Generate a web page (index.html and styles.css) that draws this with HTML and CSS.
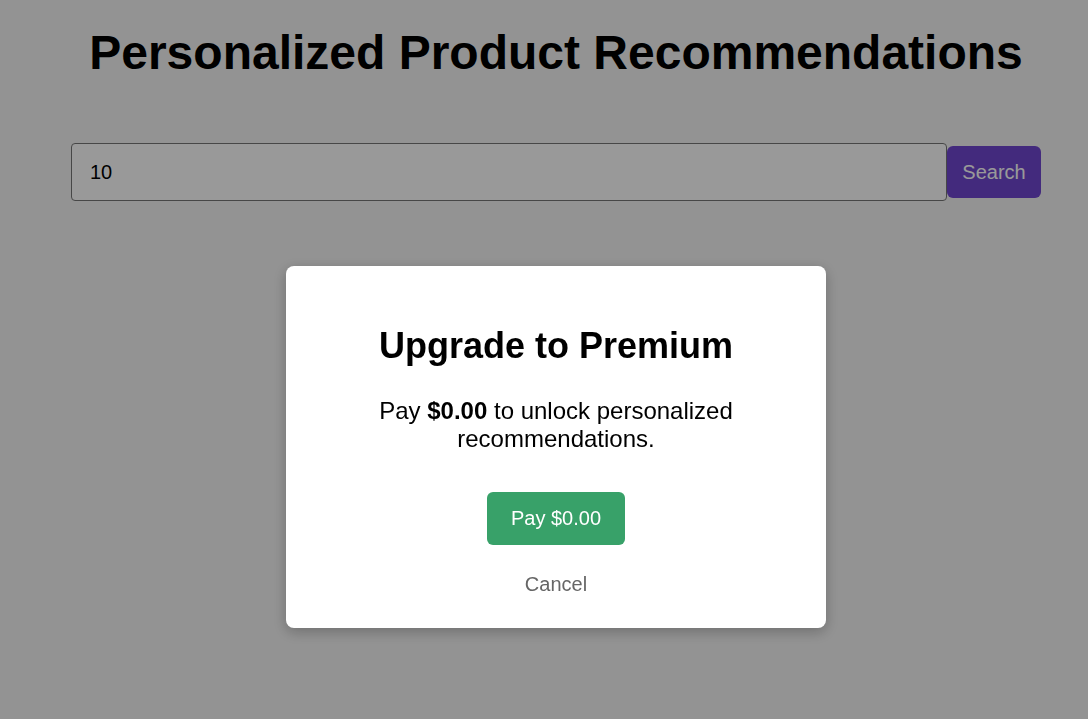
FILE: index.html
```html
<!DOCTYPE html>
<html lang="en">
<head>
<meta charset="utf-8">
<title>Personalized Product Recommendations</title>
<link rel="stylesheet" href="styles.css">
</head>
<body>
  <main class="page">
    <h1 class="title">Personalized Product Recommendations</h1>
    <div class="search-row">
      <input class="search-input" type="text" value="10">
      <button class="search-btn">Search</button>
    </div>
  </main>
  <div class="overlay">
    <div class="modal">
      <h2 class="modal-title">Upgrade to Premium</h2>
      <p class="modal-text">Pay <strong>$0.00</strong> to unlock personalized recommendations.</p>
      <button class="pay-btn">Pay $0.00</button>
      <button class="cancel-btn">Cancel</button>
    </div>
  </div>
</body>
</html>
```
FILE: styles.css
```css
* { box-sizing: border-box; }
html, body { margin: 0; padding: 0; }
body {
  background: #f5f5f5;
  font-family: "Liberation Sans", Arial, sans-serif;
  color: #000;
  padding-left: 24px;
  height: 719px;
  overflow: hidden;
}
.page {
  max-width: 970px;
  margin: 0 auto;
}
.title {
  margin: 25px 0 0;
  font-size: 48px;
  line-height: 55px;
  font-weight: bold;
  text-align: center;
}
.search-row {
  margin-top: 63px;
  display: flex;
  align-items: center;
}
.search-input {
  flex: 1;
  min-width: 0;
  height: 58px;
  padding: 0 18px;
  font-family: "Liberation Sans", Arial, sans-serif;
  font-size: 20px;
  border: 1px solid #777;
  border-radius: 4px;
  background: #fff;
  color: #000;
  outline: none;
}
.search-btn {
  flex: 0 0 94px;
  width: 94px;
  height: 52px;
  padding: 0;
  font-family: "Liberation Sans", Arial, sans-serif;
  font-size: 20px;
  color: #fff;
  background: #7046d0;
  border: none;
  border-radius: 6px;
}
.overlay {
  position: fixed;
  inset: 0;
  background: rgba(0, 0, 0, 0.4);
  display: flex;
  justify-content: center;
  align-items: flex-start;
  padding-left: 24px;
  padding-top: 266px;
}
.modal {
  width: 540px;
  background: #fff;
  border-radius: 8px;
  box-shadow: 0 4px 14px rgba(0, 0, 0, 0.25);
  padding: 30px 30px 32px;
  display: flex;
  flex-direction: column;
  align-items: center;
  text-align: center;
}
.modal-title {
  margin: 29px 0 0;
  font-size: 36px;
  line-height: 41px;
  font-weight: bold;
}
.modal-text {
  margin: 31px 0 0;
  font-size: 24px;
  line-height: 28px;
}
.pay-btn {
  margin-top: 39px;
  padding: 15px 24px;
  font-family: "Liberation Sans", Arial, sans-serif;
  font-size: 20px;
  line-height: 23px;
  color: #fff;
  background: #38a169;
  border: none;
  border-radius: 6px;
}
.cancel-btn {
  margin-top: 28px;
  padding: 0;
  font-family: "Liberation Sans", Arial, sans-serif;
  font-size: 20px;
  line-height: 23px;
  color: #666;
  background: none;
  border: none;
}
```
